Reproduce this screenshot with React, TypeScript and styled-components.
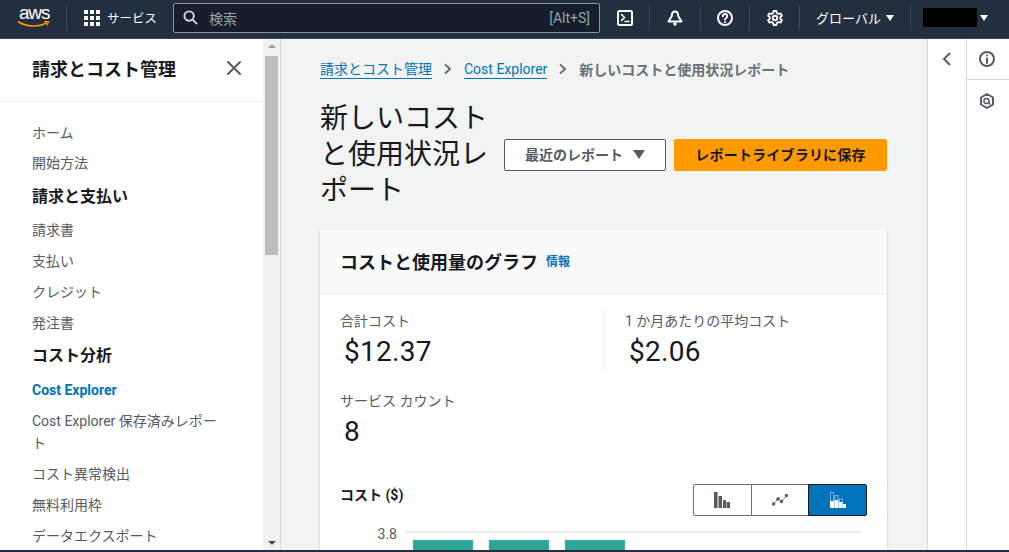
import { FC, ReactNode } from 'react';
import styled, { createGlobalStyle } from 'styled-components';

const fontStack = `Roboto, "Noto Sans CJK JP", sans-serif`;

const GlobalStyle = createGlobalStyle`
	html, body {
		margin: 0;
		height: 100%;
		overflow: hidden;
		background: #f2f3f3;
		font-family: ${fontStack};
	}
	* {
		box-sizing: border-box;
	}
`;

const Page = styled.div`
	display: flex;
	flex-direction: column;
	width: 1009px;
	height: 552px;
	border-bottom: 2px solid #232f3e;
	overflow: hidden;
`;

const TopBar = styled.header`
	display: flex;
	align-items: center;
	flex: 0 0 39px;
	height: 39px;
	padding-bottom: 3px;
	background: #232f3e;
	border-bottom: 1px solid #3b4653;
	color: #fff;
`;

const LogoBox = styled.div`
	position: relative;
	flex: 0 0 66px;
	height: 35px;
	padding: 3px 0 0 19px;
	font-family: "Liberation Sans", sans-serif;
	font-size: 19px;
	line-height: 19px;
	letter-spacing: -1.2px;
`;

const Smile = styled.svg`
	position: absolute;
	left: 17px;
	top: 20px;
`;

const Divider = styled.span`
	width: 1px;
	height: 24px;
	background: #414d5c;
	flex: none;
`;

const ServicesButton = styled.div`
	display: flex;
	align-items: center;
	gap: 7px;
	flex: 0 0 106px;
	padding-left: 17px;
	font-size: 12.5px;
`;

const SearchBox = styled.div`
	display: flex;
	align-items: center;
	flex: 0 0 427px;
	height: 30px;
	padding: 0 9px;
	background: #161e2d;
	border: 1px solid #8d9499;
	border-radius: 2px;
	color: #95a5a6;
`;

const SearchText = styled.span`
	flex: 1;
	margin-left: 11px;
	font-size: 14px;
`;

const Shortcut = styled.span`
	font-size: 14px;
`;

const IconSlot = styled.div<{ $width: number }>`
	display: flex;
	align-items: center;
	justify-content: center;
	width: ${(p) => p.$width}px;
	height: 24px;
`;

const RegionText = styled.div`
	display: flex;
	align-items: center;
	justify-content: center;
	gap: 2px;
	width: 110px;
	font-size: 13px;
`;

const AccountBox = styled.div`
	display: flex;
	align-items: center;
	padding-left: 12px;
`;

const MaskedName = styled.span`
	display: block;
	width: 54px;
	height: 19px;
	background: #000;
`;

const Caret = styled.span`
	width: 0;
	height: 0;
	border-left: 4px solid transparent;
	border-right: 4px solid transparent;
	border-top: 6px solid currentColor;
	margin-left: 3px;
`;

const Body = styled.div`
	display: flex;
	flex: 1;
	min-height: 0;
`;

const Sidebar = styled.aside`
	display: flex;
	flex-direction: column;
	flex: 0 0 263px;
	background: #fff;
	overflow: hidden;
`;

const SidebarHead = styled.div`
	display: flex;
	align-items: center;
	justify-content: space-between;
	flex: 0 0 63px;
	padding: 0 21px 4px 32px;
	border-bottom: 1px solid #eaeded;
	font-size: 18px;
	font-weight: 700;
	color: #16191f;
`;

const NavList = styled.ul`
	list-style: none;
	margin: 0;
	padding: 19.6px 45px 0 32px;
	display: flex;
	flex-direction: column;
	gap: 8.8px;
`;

const NavItem = styled.li<{ $kind?: 'section' | 'active' }>`
	line-height: 22px;
	margin: ${(p) =>
		p.$kind === 'section' ? '2.5px 0 3px' : p.$kind === 'active' ? '0.4px 0 0' : '0'};
	font-size: ${(p) => (p.$kind === 'section' ? '16px' : '14px')};
	font-weight: ${(p) => (p.$kind ? 700 : 400)};
	color: ${(p) =>
		p.$kind === 'section'
			? '#16191f'
			: p.$kind === 'active'
				? '#0073bb'
				: '#545b64'};
`;

const ScrollTrack = styled.div`
	display: flex;
	flex-direction: column;
	align-items: center;
	flex: 0 0 17px;
	background: #f1f1f1;
	padding-top: 5px;
`;

const ScrollUp = styled.span`
	width: 0;
	height: 0;
	border-left: 4px solid transparent;
	border-right: 4px solid transparent;
	border-bottom: 4px solid #a3a3a3;
`;

const ScrollDown = styled.span`
	width: 0;
	height: 0;
	margin-top: auto;
	margin-bottom: 5px;
	border-left: 4px solid transparent;
	border-right: 4px solid transparent;
	border-top: 4px solid #505050;
`;

const ScrollThumb = styled.div`
	width: 13px;
	height: 199px;
	margin-top: 8px;
	background: #bdbdbd;
`;

const Content = styled.main`
	flex: 1;
	min-width: 0;
	padding: 18px 40px 0 39px;
	border-left: 1px solid #d5dbdb;
	overflow: hidden;
`;

const Breadcrumbs = styled.nav`
	display: flex;
	align-items: center;
	height: 24px;
	font-size: 14px;
	color: #687078;
`;

const Crumb = styled.a`
	color: #0073bb;
	line-height: 18px;
	border-bottom: 1px solid #0073bb;
`;

const CrumbSep = styled.svg`
	margin: 0 11px;
`;

const CrumbCurrent = styled.span`
	font-weight: 600;
`;

const TitleRow = styled.div`
	display: flex;
	align-items: center;
	margin-top: 18px;
	height: 108px;
`;

const Title = styled.h1`
	width: 184px;
	margin: 0;
	padding-top: 4px;
	font-size: 28px;
	font-weight: 400;
	line-height: 36px;
	color: #16191f;
`;

const ButtonRow = styled.div`
	display: flex;
	gap: 8px;
	margin-top: 4px;
`;

const GhostButton = styled.button`
	display: flex;
	align-items: center;
	justify-content: center;
	gap: 10px;
	width: 162px;
	height: 32px;
	padding: 0 0 2px;
	background: #fff;
	border: 1px solid #545b64;
	border-radius: 2px;
	color: #545b64;
	font: 600 14px ${fontStack};
`;

const PrimaryButton = styled.button`
	width: 213px;
	height: 32px;
	padding: 0 0 2px;
	background: #ff9900;
	border: 0;
	border-radius: 2px;
	color: #16191f;
	font: 700 14px ${fontStack};
	letter-spacing: 0.2px;
`;

const BigCaret = styled.span`
	width: 0;
	height: 0;
	border-left: 6px solid transparent;
	border-right: 6px solid transparent;
	border-top: 9px solid #545b64;
`;

const Card = styled.section`
	margin-top: 23px;
	width: 567px;
	background: #fff;
	box-shadow: 0 1px 2px rgba(0, 28, 36, 0.25);
	height: 340px;
`;

const CardHead = styled.div`
	display: flex;
	align-items: center;
	gap: 8px;
	height: 64px;
	padding: 0 20px 2px;
	background: #fafafa;
	border-bottom: 1px solid #eaeded;
`;

const CardTitle = styled.h2`
	margin: 0;
	font-size: 18px;
	font-weight: 700;
	color: #16191f;
`;

const InfoLink = styled.a`
	font-size: 12px;
	font-weight: 700;
	color: #0073bb;
`;

const CardBody = styled.div`
	padding: 16px 20px 0;
`;

const StatRow = styled.div`
	display: flex;
`;

const Stat = styled.div<{ $divided?: boolean }>`
	flex: 0 0 264px;
	height: 60px;
	padding-left: ${(p) => (p.$divided ? '20px' : '0')};
	border-left: ${(p) => (p.$divided ? '1px solid #eaeded' : '0')};
`;

const StatLabel = styled.div`
	font-size: 14px;
	line-height: 22px;
	color: #545b64;
`;

const StatValue = styled.div`
	padding-left: 4px;
	font-size: 28px;
	line-height: 40px;
	letter-spacing: 0.3px;
	color: #16191f;
`;

const CountStat = styled.div`
	margin-top: 20px;
`;

const ChartHead = styled.div`
	display: flex;
	align-items: flex-start;
	justify-content: space-between;
	margin-top: 32px;
`;

const ChartTitle = styled.div`
	font-size: 14px;
	line-height: 22px;
	font-weight: 700;
	color: #16191f;
`;

const Segments = styled.div`
	display: flex;
	height: 32px;
`;

const Segment = styled.div<{ $selected?: boolean }>`
	display: flex;
	align-items: center;
	justify-content: center;
	width: 58.67px;
	margin-left: -1px;
	background: ${(p) => (p.$selected ? '#0073bb' : '#fff')};
	border: 1px solid ${(p) => (p.$selected ? '#16191f' : '#687078')};
	&:first-child {
		margin-left: 0;
		border-radius: 2px 0 0 2px;
	}
	&:last-child {
		border-radius: 0 2px 2px 0;
	}
`;

const ChartSvg = styled.svg`
	display: block;
	margin: 8px 0 0 -20px;
`;

const RightRail = styled.aside`
	display: flex;
	flex: 0 0 82px;
	background: #fff;
	border-left: 1px solid #d5dbdb;
`;

const RailToggle = styled.div`
	display: flex;
	justify-content: center;
	padding-top: 12px;
	width: 39px;
	border-right: 1px solid #d5dbdb;
`;

const RailTools = styled.div`
	flex: 1;
`;

const RailTool = styled.div`
	display: flex;
	align-items: center;
	justify-content: center;
	height: 41px;
	padding-right: 2px;
	border-bottom: 1px solid #d5dbdb;
	&:last-child {
		border-bottom: 0;
	}
`;

const GridIcon: FC = () => (
	<svg width="16" height="16" viewBox="0 0 16 16" fill="#fff">
		{[0, 6, 12].map((y) =>
			[0, 6, 12].map((x) => <rect key={`${x}-${y}`} x={x} y={y} width="4" height="4" />)
		)}
	</svg>
);

const Stroke: FC<{ size?: number; color?: string; width?: number; children: ReactNode }> = ({
	size = 16,
	color = '#fff',
	width = 2,
	children,
}) => (
	<svg
		width={size}
		height={size}
		viewBox="0 0 16 16"
		fill="none"
		stroke={color}
		strokeWidth={width}
		strokeLinecap="round"
		strokeLinejoin="round"
	>
		{children}
	</svg>
);

const navItems: { label: string; kind?: 'section' | 'active' }[] = [
	{ label: 'ホーム' },
	{ label: '開始方法' },
	{ label: '請求と支払い', kind: 'section' },
	{ label: '請求書' },
	{ label: '支払い' },
	{ label: 'クレジット' },
	{ label: '発注書' },
	{ label: 'コスト分析', kind: 'section' },
	{ label: 'Cost Explorer', kind: 'active' },
	{ label: 'Cost Explorer 保存済みレポート' },
	{ label: 'コスト異常検出' },
	{ label: '無料利用枠' },
	{ label: 'データエクスポート' },
];

const App: FC = () => (
	<Page>
		<GlobalStyle />
		<TopBar>
			<LogoBox>
				aws
				<Smile width="33" height="8" viewBox="0 0 33 8" fill="none">
					<path d="M1 1.500C9 7 22 7.500 30 2.500" stroke="#ff9900" strokeWidth="1.600" />
					<path d="M27 1.500h4.500L30 5.500" stroke="#ff9900" strokeWidth="1.200" />
				</Smile>
			</LogoBox>
			<Divider />
			<ServicesButton>
				<GridIcon />
				サービス
			</ServicesButton>
			<SearchBox>
				<Stroke size={15} color="#d5dbdb">
					<circle cx="6.500" cy="6.500" r="5" />
					<path d="M10.500 10.500 14.500 14.500" />
				</Stroke>
				<SearchText>検索</SearchText>
				<Shortcut>[Alt+S]</Shortcut>
			</SearchBox>
			<IconSlot $width={49}>
				<Stroke>
					<rect x="1" y="1" width="14" height="14" rx="1.500" />
					<path d="M4.500 4.500 7.500 7.500 4.500 10.500M8 11.500h4" strokeWidth="1.600" />
				</Stroke>
			</IconSlot>
			<Divider />
			<IconSlot $width={50}>
				<Stroke>
					<path d="M8 1.500C5.800 1.500 4.800 3.500 4.800 6L1.500 11.500H14.500L11.200 6C11.200 3.500 10.200 1.500 8 1.500Z" />
					<circle cx="8" cy="14" r="1" strokeWidth="1.400" />
				</Stroke>
			</IconSlot>
			<Divider />
			<IconSlot $width={48}>
				<Stroke>
					<circle cx="8" cy="8" r="7" />
					<path d="M5.800 6.200a2.200 2.200 0 1 1 3.400 1.800c-.8.500-1.200 1-1.200 1.600" />
					<path d="M8 12v.1" />
				</Stroke>
			</IconSlot>
			<Divider />
			<IconSlot $width={49}>
				<Stroke>
					<circle cx="8" cy="8" r="2.200" />
					<path d="M6.600 1h2.800l.4 2 1.700 1 2-.7 1.400 2.400-1.600 1.400v1.800l1.600 1.400-1.400 2.400-2-.7-1.700 1-.4 2H6.600l-.4-2-1.700-1-2 .7L1.100 10.300l1.600-1.400V7.100L1.100 5.700l1.400-2.400 2 .7 1.700-1z" strokeWidth="1.800" />
				</Stroke>
			</IconSlot>
			<Divider />
			<RegionText>
				グローバル
				<Caret />
			</RegionText>
			<Divider />
			<AccountBox>
				<MaskedName />
				<Caret />
			</AccountBox>
		</TopBar>
		<Body>
			<Sidebar>
				<SidebarHead>
					請求とコスト管理
					<Stroke size={16} color="#545b64">
						<path d="M2 2 14 14M14 2 2 14" />
					</Stroke>
				</SidebarHead>
				<NavList>
					{navItems.map(({ label, kind }) => (
						<NavItem key={label} $kind={kind}>
							{label}
						</NavItem>
					))}
				</NavList>
			</Sidebar>
			<ScrollTrack>
				<ScrollUp />
				<ScrollThumb />
				<ScrollDown />
			</ScrollTrack>
			<Content>
				<Breadcrumbs>
					<Crumb>請求とコスト管理</Crumb>
					<CrumbSep width="10" height="12" viewBox="0 0 10 12" fill="none" stroke="#687078" strokeWidth="2">
						<path d="M2 1.500 7 6 2 10.500" />
					</CrumbSep>
					<Crumb>Cost Explorer</Crumb>
					<CrumbSep width="10" height="12" viewBox="0 0 10 12" fill="none" stroke="#687078" strokeWidth="2">
						<path d="M2 1.500 7 6 2 10.500" />
					</CrumbSep>
					<CrumbCurrent>新しいコストと使用状況レポート</CrumbCurrent>
				</Breadcrumbs>
				<TitleRow>
					<Title>新しいコストと使用状況レポート</Title>
					<ButtonRow>
						<GhostButton>
							最近のレポート
							<BigCaret />
						</GhostButton>
						<PrimaryButton>レポートライブラリに保存</PrimaryButton>
					</ButtonRow>
				</TitleRow>
				<Card>
					<CardHead>
						<CardTitle>コストと使用量のグラフ</CardTitle>
						<InfoLink>情報</InfoLink>
					</CardHead>
					<CardBody>
						<StatRow>
							<Stat>
								<StatLabel>合計コスト</StatLabel>
								<StatValue>$12.37</StatValue>
							</Stat>
							<Stat $divided>
								<StatLabel>1 か月あたりの平均コスト</StatLabel>
								<StatValue>$2.06</StatValue>
							</Stat>
						</StatRow>
						<CountStat>
							<StatLabel>サービス カウント</StatLabel>
							<StatValue>8</StatValue>
						</CountStat>
						<ChartHead>
							<ChartTitle>コスト ($)</ChartTitle>
							<Segments>
								<Segment>
									<svg width="16" height="16" viewBox="0 0 16 16" fill="#545b64">
										<rect x="0" y="0" width="3.500" height="16" />
										<rect x="4.500" y="4" width="3.500" height="12" />
										<rect x="9" y="8" width="3" height="8" />
										<rect x="12.500" y="10" width="3.500" height="6" />
									</svg>
								</Segment>
								<Segment>
									<svg width="16" height="12" viewBox="0 0 16 12" fill="#545b64" stroke="#545b64" strokeWidth="0.700">
										<path d="M1.500 10 6 5 9.500 7.500 14.500 1.500" fill="none" />
										<circle cx="1.500" cy="10" r="1.400" />
										<circle cx="6" cy="5" r="1.400" />
										<circle cx="9.500" cy="7.500" r="1.400" />
										<circle cx="14.500" cy="1.500" r="1.400" />
									</svg>
								</Segment>
								<Segment $selected>
									<svg width="16" height="16" viewBox="0 0 16 16" fill="#fff">
										<rect x="0.500" y="0.500" width="3" height="15" fill="none" stroke="#8fc1e3" strokeWidth="0.800" />
										<rect x="5" y="3.500" width="3" height="12" fill="none" stroke="#8fc1e3" strokeWidth="0.800" />
										<rect x="9.500" y="7" width="3" height="8" fill="none" stroke="#8fc1e3" strokeWidth="0.800" />
										<rect x="0" y="9" width="4" height="7" />
										<rect x="4.500" y="8" width="4" height="8" />
										<rect x="9" y="10" width="3.500" height="6" />
										<rect x="13" y="12" width="3" height="4" />
									</svg>
								</Segment>
							</Segments>
						</ChartHead>
						<ChartSvg width="567" height="40" viewBox="0 0 567 40">
							<text x="77" y="15" textAnchor="end" fontSize="14" fill="#545b64" fontFamily={fontStack}>
								3.8
							</text>
							<rect x="85" y="7" width="457" height="2" fill="#eaeded" />
							{[93, 169, 245].map((x) => (
								<rect key={x} x={x} y="16" width="60" height="24" fill="#2ea597" stroke="#7cc4bb" strokeWidth="0.500" />
							))}
						</ChartSvg>
					</CardBody>
				</Card>
			</Content>
			<RightRail>
				<RailToggle>
					<svg width="10" height="16" viewBox="0 0 10 16" fill="none" stroke="#545b64" strokeWidth="2">
						<path d="M8 2 2 8 8 14" />
					</svg>
				</RailToggle>
				<RailTools>
					<RailTool>
						<Stroke color="#545b64">
							<circle cx="8" cy="8" r="7" />
							<path d="M8 7.500V12M8 4.500v.1" />
						</Stroke>
					</RailTool>
					<RailTool>
						<Stroke color="#545b64">
							<path d="M8 1 14 4.500V11.500L8 15 2 11.500V4.500Z" />
							<circle cx="7.500" cy="8" r="2.600" strokeWidth="1.500" />
							<path d="M9.500 9.500 11 11" strokeWidth="1.500" />
						</Stroke>
					</RailTool>
				</RailTools>
			</RightRail>
		</Body>
	</Page>
);

export default App;
